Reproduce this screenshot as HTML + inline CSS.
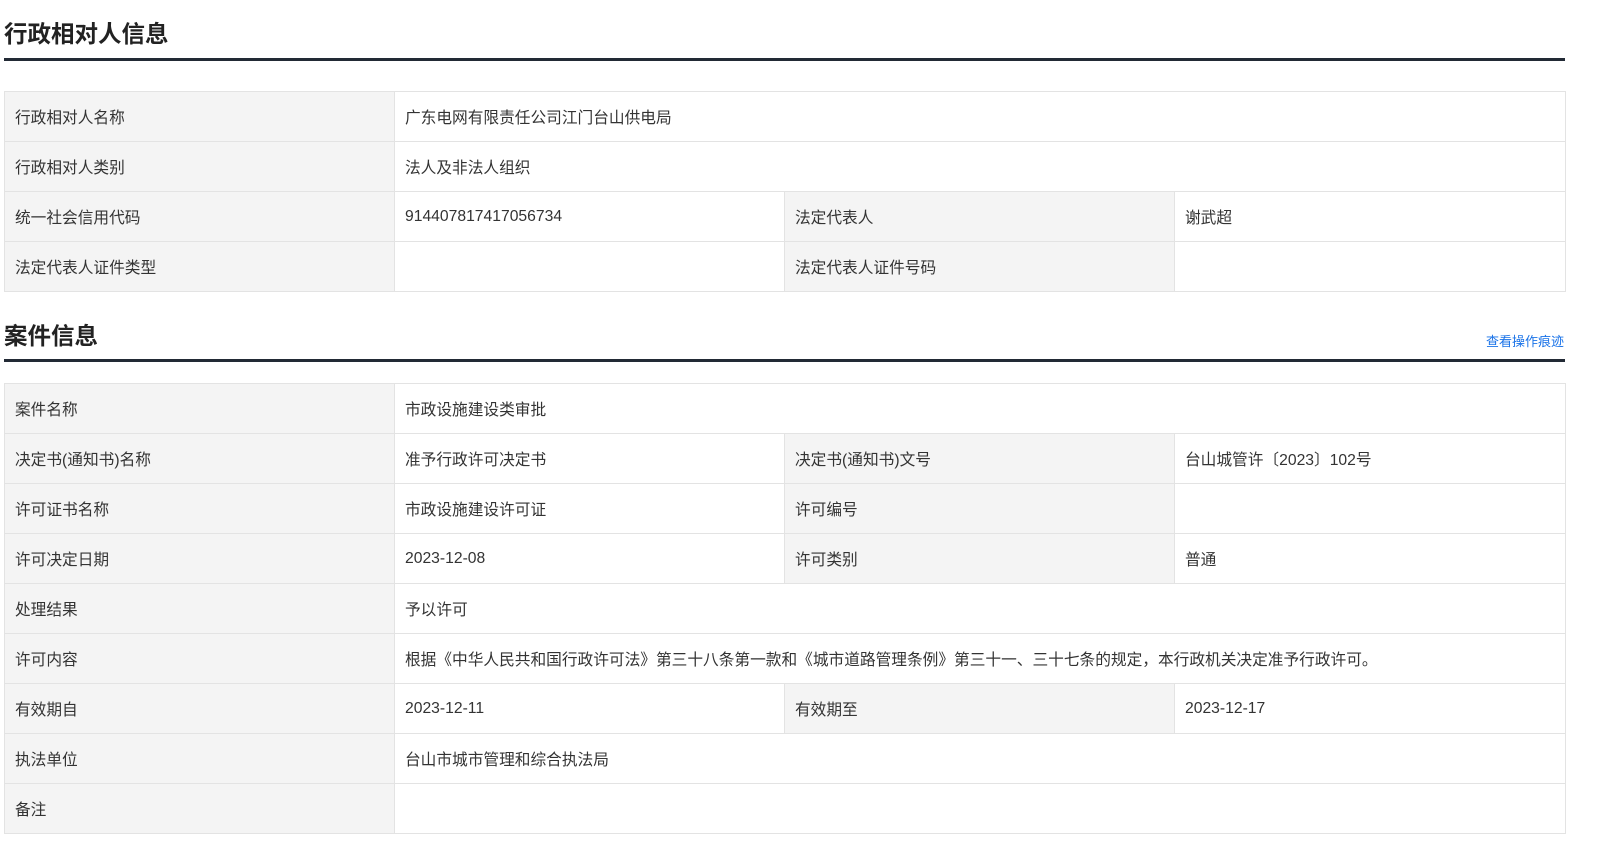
<!DOCTYPE html>
<html><head><meta charset="utf-8"><style>
*{margin:0;padding:0;box-sizing:border-box}
body{width:1600px;height:843px;overflow:hidden;background:#fff;font-family:"Liberation Sans","Noto Sans CJK SC",sans-serif;color:#333}
.h{position:absolute;left:4px;width:1561px;border-bottom:3px solid #222a35;height:0}
.t{position:absolute;left:4px;font-size:23.5px;font-weight:bold;color:#222;line-height:30px}
table{position:absolute;left:4px;width:1561px;border-collapse:collapse;table-layout:fixed}
td{height:50px;border:1px solid #e3e3e3;font-size:15.7px;padding-left:10px;color:#333;vertical-align:middle}
td.l{background:#f4f4f4}
a{position:absolute;right:36px;top:331px;font-size:13px;color:#1a73e8;text-decoration:none}
</style></head><body>
<div class="t" style="top:19px">行政相对人信息</div>
<div class="h" style="top:58px"></div>
<table style="top:91px">
<colgroup><col style="width:390px"><col style="width:390px"><col style="width:390px"><col style="width:391px"></colgroup>
<tr><td class="l">行政相对人名称</td><td colspan="3">广东电网有限责任公司江门台山供电局</td></tr>
<tr><td class="l">行政相对人类别</td><td colspan="3">法人及非法人组织</td></tr>
<tr><td class="l">统一社会信用代码</td><td>914407817417056734</td><td class="l">法定代表人</td><td>谢武超</td></tr>
<tr><td class="l">法定代表人证件类型</td><td></td><td class="l">法定代表人证件号码</td><td></td></tr>
</table>
<div class="t" style="top:321px">案件信息</div>
<a>查看操作痕迹</a>
<div class="h" style="top:359px"></div>
<table style="top:383px">
<colgroup><col style="width:390px"><col style="width:390px"><col style="width:390px"><col style="width:391px"></colgroup>
<tr><td class="l">案件名称</td><td colspan="3">市政设施建设类审批</td></tr>
<tr><td class="l">决定书(通知书)名称</td><td>准予行政许可决定书</td><td class="l">决定书(通知书)文号</td><td>台山城管许〔2023〕102号</td></tr>
<tr><td class="l">许可证书名称</td><td>市政设施建设许可证</td><td class="l">许可编号</td><td></td></tr>
<tr><td class="l">许可决定日期</td><td>2023-12-08</td><td class="l">许可类别</td><td>普通</td></tr>
<tr><td class="l">处理结果</td><td colspan="3">予以许可</td></tr>
<tr><td class="l">许可内容</td><td colspan="3">根据《中华人民共和国行政许可法》第三十八条第一款和《城市道路管理条例》第三十一、三十七条的规定，本行政机关决定准予行政许可。</td></tr>
<tr><td class="l">有效期自</td><td>2023-12-11</td><td class="l">有效期至</td><td>2023-12-17</td></tr>
<tr><td class="l">执法单位</td><td colspan="3">台山市城市管理和综合执法局</td></tr>
<tr><td class="l">备注</td><td colspan="3"></td></tr>
</table>
</body></html>
